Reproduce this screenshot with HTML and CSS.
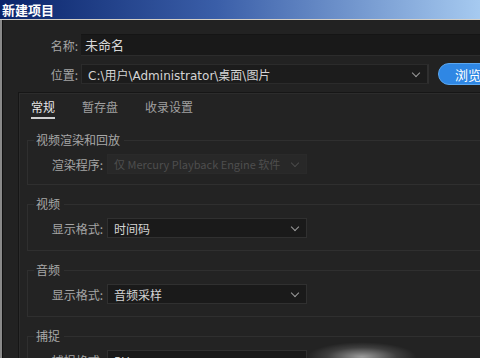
FILE: index.html
```html
<!DOCTYPE html>
<html lang="zh-CN">
<head>
    <meta charset="UTF-8">
    <title>新建项目</title>
    <link rel="stylesheet" href="styles.css">
</head>
<body>
    <div class="titlebar">新建项目</div>

    <div class="window">
        <!-- 名称 / 位置 -->
        <div class="row row-name">
            <label class="row-label">名称:</label>
            <div class="text-input">未命名</div>
        </div>
        <div class="row row-path">
            <label class="row-label">位置:</label>
            <div class="select select-path">
                <span>C:\用户\Administrator\桌面\图片</span>
                <i class="chevron"></i>
            </div>
            <button class="browse">浏览</button>
        </div>

        <!-- 选项卡面板 -->
        <div class="panel">
            <ul class="tabs">
                <li class="active">常规</li>
                <li>暂存盘</li>
                <li>收录设置</li>
            </ul>

            <fieldset class="group group-first">
                <legend>视频渲染和回放</legend>
                <div class="group-row">
                    <span class="group-label">渲染程序:</span>
                    <div class="select select-sm disabled">
                        <span>仅 Mercury Playback Engine 软件</span>
                        <i class="chevron"></i>
                    </div>
                </div>
            </fieldset>

            <fieldset class="group">
                <legend>视频</legend>
                <div class="group-row">
                    <span class="group-label">显示格式:</span>
                    <div class="select select-sm">
                        <span>时间码</span>
                        <i class="chevron"></i>
                    </div>
                </div>
            </fieldset>

            <fieldset class="group">
                <legend>音频</legend>
                <div class="group-row">
                    <span class="group-label">显示格式:</span>
                    <div class="select select-sm">
                        <span>音频采样</span>
                        <i class="chevron"></i>
                    </div>
                </div>
            </fieldset>

            <fieldset class="group">
                <legend>捕捉</legend>
                <div class="group-row">
                    <span class="group-label">捕捉格式:</span>
                    <div class="select select-sm">
                        <span>DV</span>
                        <i class="chevron"></i>
                    </div>
                </div>
            </fieldset>
        </div>

        <!-- 图片上的水印光斑 -->
        <div class="glare"></div>
    </div>
</body>
</html>
```

FILE: styles.css
```css
body {
    margin: 0;
    width: 480px;
    height: 358px;
    overflow: hidden;
    background: #1f1f1f;
    font-family: "DejaVu Sans", "Noto Sans CJK SC", sans-serif;
    font-size: 12px;
    color: #a9a9a9;
}

.titlebar {
    height: 19px;
    line-height: 19px;
    padding-left: 2px;
    background: linear-gradient(to right, #0a246a 0%, #3a5ea8 45%, #a6caf0 100%);
    color: #fff;
    font-family: "Noto Sans CJK SC", sans-serif;
    font-weight: bold;
    font-size: 13px;
    border-bottom: 1px solid #d4d0c8;
}

.window {
    position: relative;
    height: 338px;
    border-left: 2px solid #8a8a8a;
    box-shadow: inset 1px 0 0 #101010;
    background: #222;
}

.row {
    display: flex;
    align-items: center;
    gap: 3px;
}

.row-name {
    padding-top: 14px;
}

.row-path {
    padding-top: 7px;
}

.row-label {
    flex: none;
    width: 76px;
    text-align: right;
    font-family: "Noto Sans CJK SC", sans-serif;
    color: #a5a5a5;
}

.text-input {
    flex: 1;
    height: 20px;
    line-height: 20px;
    padding-left: 4px;
    background: #191919;
    border-top: 1px solid #151515;
    border-bottom: 1px solid #2c2c2c;
    color: #d8d8d8;
    font-family: "Noto Sans CJK SC", sans-serif;
    font-size: 13px;
}

.select {
    display: flex;
    align-items: center;
    justify-content: space-between;
    height: 20px;
    padding: 0 8px 0 6px;
    background: #1c1c1c;
    border: 1px solid #2b2b2b;
    color: #d4d4d4;
    white-space: nowrap;
    overflow: hidden;
    box-sizing: border-box;
}

.select-path {
    flex: none;
    width: 348px;
    font-size: 12px;
    border-right: 2px solid #2f2f2f;
}

.chevron {
    flex: none;
    width: 5px;
    height: 5px;
    margin-bottom: 3px;
    border-right: 1.5px solid #9a9a9a;
    border-bottom: 1.5px solid #9a9a9a;
    transform: rotate(45deg);
}

.browse {
    flex: none;
    margin-left: 6px;
    width: 62px;
    height: 22px;
    padding: 0 0 0 16px;
    text-align: left;
    border: 1px solid #5aa7f0;
    border-radius: 11px;
    background: #2f87e4;
    color: #fff;
    font-family: "Noto Sans CJK SC", sans-serif;
    font-size: 13px;
}

.panel {
    margin: 7px -40px 0 16px;
    padding: 0 0 0 8px;
    border: 1px solid #161616;
    box-shadow: inset 1px 1px 0 #2c2c2c;
    background: #232323;
    height: 300px;
}

.tabs {
    display: flex;
    gap: 27px;
    list-style: none;
    margin: 0;
    padding: 5px 0 0 4px;
    font-family: "Noto Sans CJK SC", sans-serif;
    color: #a0a0a0;
}

.tabs li {
    line-height: 18px;
    padding-bottom: 1px;
}

.tabs li.active {
    color: #e6e6e6;
    border-bottom: 2px solid #d0d0d0;
}

.group {
    margin: 11px 0 0;
    padding: 0 0 12px 6px;
    min-width: 0;
    border: 1px solid #2f2f2f;
    border-right: 0;
}

.group.group-first {
    margin-top: 13px;
    padding-bottom: 10px;
}

.group legend {
    padding: 0 4px 0 2px;
    line-height: 16px;
    font-family: "Noto Sans CJK SC", sans-serif;
    color: #a8a8a8;
}

.group-row {
    display: flex;
    align-items: center;
    gap: 4px;
    padding-top: 6px;
}

.group-label {
    width: 69px;
    text-align: right;
    font-family: "Noto Sans CJK SC", sans-serif;
    color: #a5a5a5;
}

.select-sm {
    width: 200px;
    background: #1a1a1a;
    border: 1px solid #303030;
    font-family: "Noto Sans CJK SC", sans-serif;
    font-size: 12px;
}

.select-sm.disabled {
    background: #282828;
    border-color: #2a2a2a;
    color: #4e4e4e;
    font-size: 11px;
}

.select-sm.disabled .chevron {
    border-color: #4a4a4a;
}

.glare {
    position: absolute;
    left: 305px;
    top: 322px;
    width: 110px;
    height: 30px;
    border-radius: 50%;
    background: radial-gradient(ellipse at center, rgba(255, 255, 255, 0.55) 0%, rgba(255, 255, 255, 0.12) 45%, rgba(255, 255, 255, 0) 70%);
}
```
